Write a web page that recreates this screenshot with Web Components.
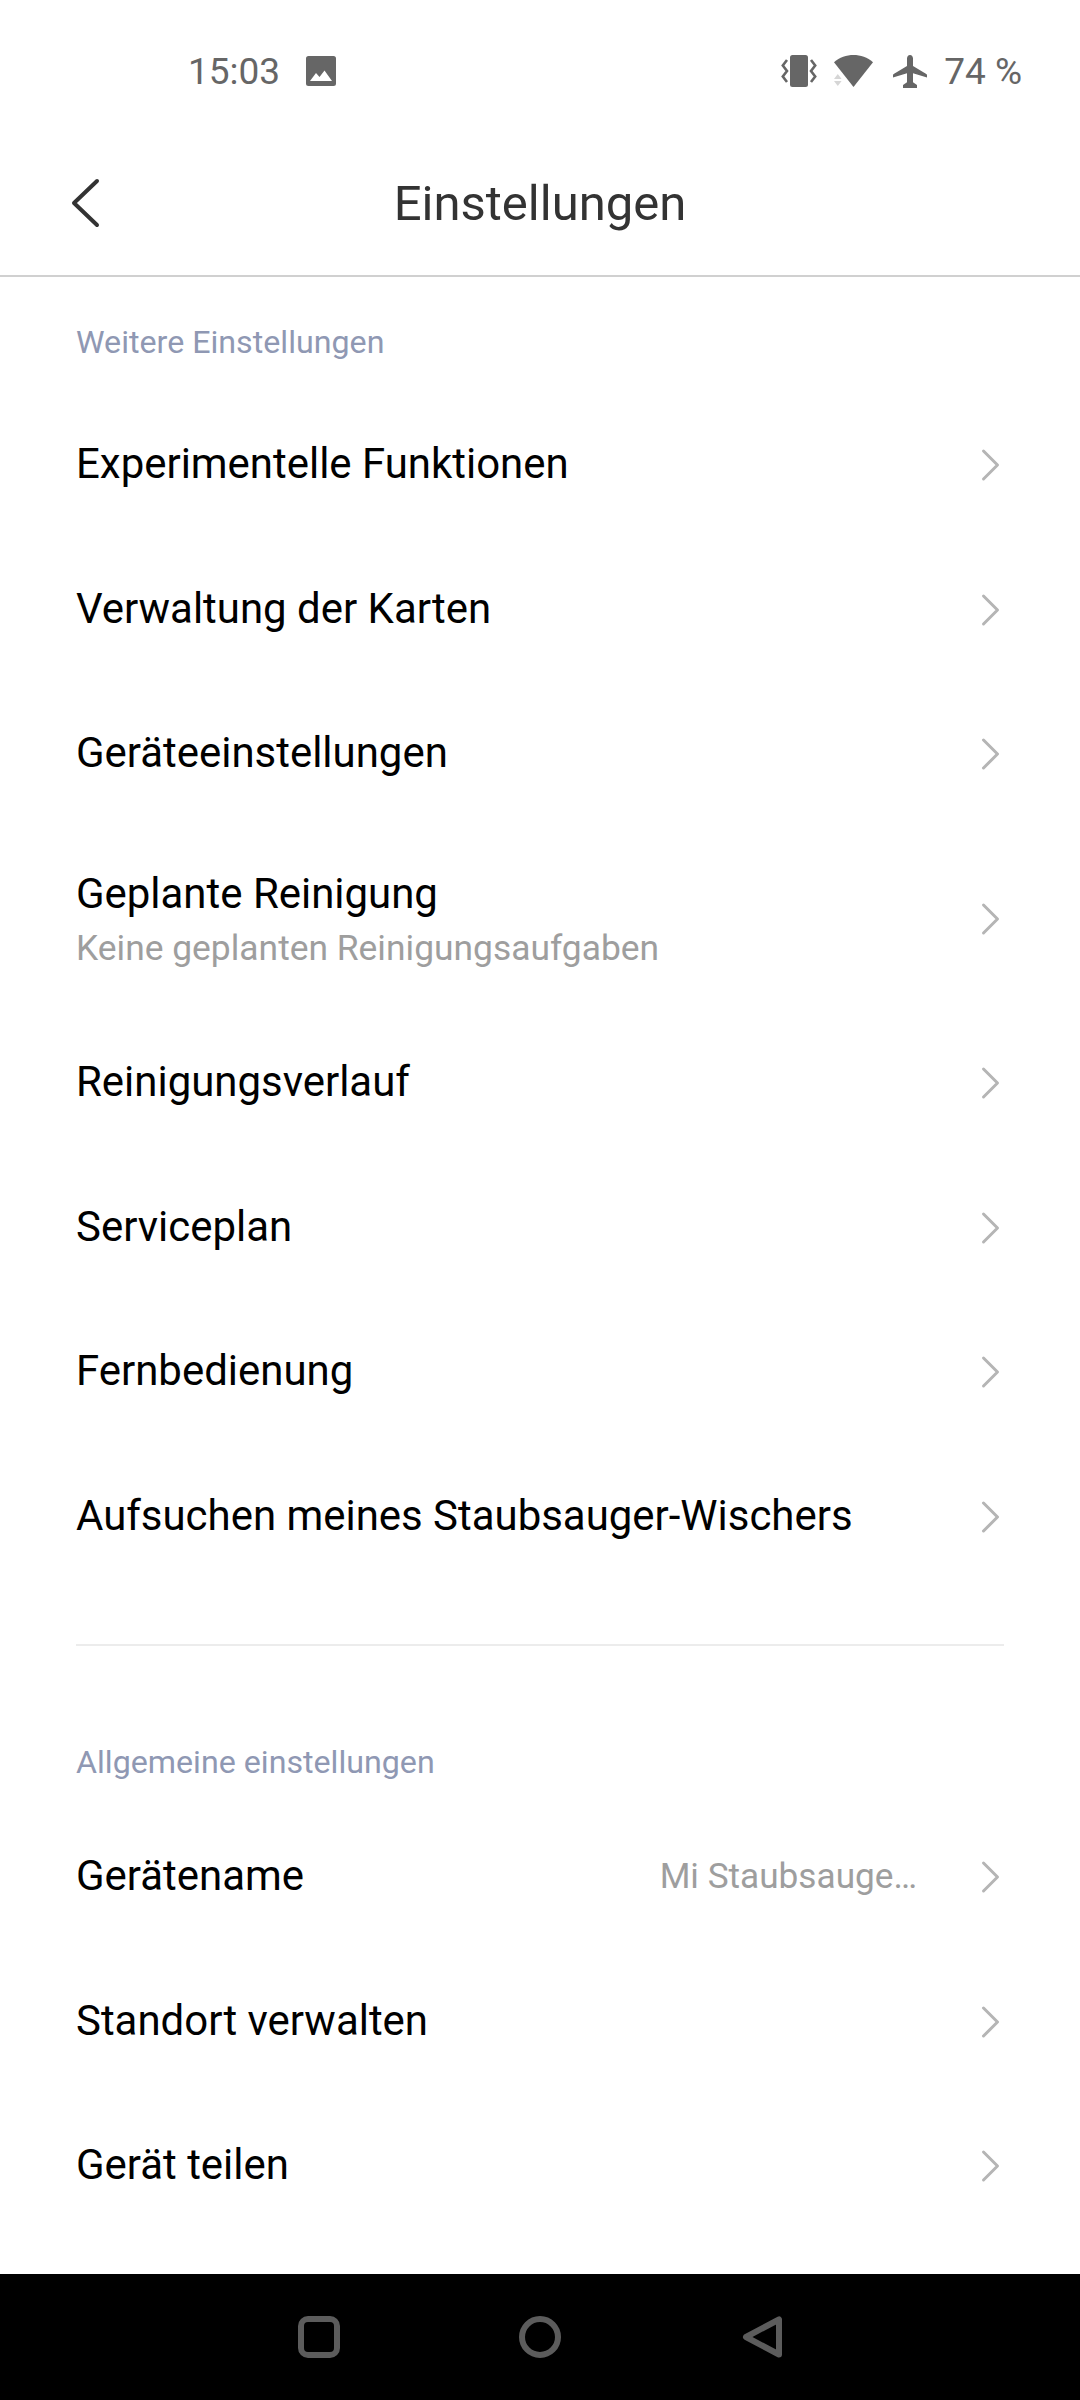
<!DOCTYPE html>
<html>
<head>
<meta charset="utf-8">
<style>
  html, body { margin: 0; padding: 0; background: #fff; }
  body { width: 1080px; height: 2400px; overflow: hidden; font-family: Roboto, sans-serif; display: flex; flex-direction: column; }
  main { flex: 1; display: block; }
</style>
</head>
<body>
<status-bar></status-bar>
<app-header>Einstellungen</app-header>
<main>
  <section-title style="--top: 44.5px; --h: 70.5px">Weitere Einstellungen</section-title>
  <setting-row>Experimentelle Funktionen</setting-row>
  <setting-row>Verwaltung der Karten</setting-row>
  <setting-row>Geräteeinstellungen</setting-row>
  <setting-row style="--h: 184px"><span slot="sub">Keine geplanten Reinigungsaufgaben</span>Geplante Reinigung</setting-row>
  <setting-row>Reinigungsverlauf</setting-row>
  <setting-row>Serviceplan</setting-row>
  <setting-row>Fernbedienung</setting-row>
  <setting-row>Aufsuchen meines Staubsauger-Wischers</setting-row>
  <list-divider></list-divider>
  <section-title style="--top: 0px; --h: 61.5px">Allgemeine einstellungen</section-title>
  <setting-row><span slot="value">Mi Staubsauge…</span>Gerätename</setting-row>
  <setting-row>Standort verwalten</setting-row>
  <setting-row>Gerät teilen</setting-row>
</main>
<nav-bar></nav-bar>

<script>
  const statusTemplate = document.createElement('template')
  statusTemplate.innerHTML = `
    <style>
      :host { display: flex; align-items: center; height: 142px; box-sizing: border-box; padding: 0 58px 0 188px; color: #666; font-size: 37px; flex: none; }
      .left, .right { display: flex; align-items: center; }
      .right { margin-left: auto; }
      svg { display: block; fill: #666; }
      .img { margin-left: 26px; }
      .wifi { margin-left: 17px; }
      .plane { margin-left: 20px; }
      .pct { margin-left: 17px; }
    </style>
    <div class="left">
      <span>15:03</span>
      <svg class="img" width="30" height="30" viewBox="0 0 30 30"><path fill-rule="evenodd" d="M2.500 0h25A2.500 2.500 0 0 1 30 2.500v25a2.500 2.500 0 0 1-2.500 2.500h-25A2.500 2.500 0 0 1 0 27.500v-25A2.500 2.500 0 0 1 2.500 0zM4 25h22l-7.500-10.500-5 6.500-3.500-4z"/></svg>
    </div>
    <div class="right">
      <svg width="36" height="33" viewBox="0 0 36 33">
        <rect x="9" y="0" width="18" height="32" rx="2.500"/>
        <path d="M6 5 L1.800 10.500 L6 16 L1.800 21.500 L6 27" fill="none" stroke="#666" stroke-width="2.600"/>
        <path d="M30 5 L34.200 10.500 L30 16 L34.200 21.500 L30 27" fill="none" stroke="#666" stroke-width="2.600"/>
      </svg>
      <svg class="wifi" width="39" height="32" viewBox="0 0 39 32">
        <path d="M0 7.300 C11 -2.300 28 -2.300 39 7.300 L19.500 32z"/>
        <path d="M0 24l3.800-5 3.800 5zM0 26l3.800 5 3.800-5z" fill="#d6d6d6"/>
      </svg>
      <svg class="plane" width="34" height="33" viewBox="0 0 34 33"><path d="M17 0c1.800 0 3 1.700 3 3.500V11l13.300 8c.5.300.7.800.7 1.300v2.300L20 18.300v8.900l4 2.800V33H10v-3l4-2.800v-8.900L0 22.600v-2.300c0-.5.200-1 .7-1.300L14 11V3.500C14 1.700 15.200 0 17 0z"/></svg>
      <span class="pct">74 %</span>
    </div>
  `
  customElements.define('status-bar',
    class extends HTMLElement {
      constructor () {
        super()
        this.attachShadow({ mode: 'open' })
          .appendChild(statusTemplate.content.cloneNode(true))
      }
    })

  const headerTemplate = document.createElement('template')
  headerTemplate.innerHTML = `
    <style>
      :host { display: block; position: relative; height: 135px; box-sizing: border-box; border-bottom: 2px solid #d0d0d0; flex: none; }
      .title { display: flex; align-items: center; justify-content: center; height: 122px; font-size: 49px; color: #333; }
      svg { position: absolute; left: 69px; top: 36px; }
    </style>
    <svg width="36" height="52" viewBox="0 0 36 52"><path d="M28 3 L5 25 L28 47" fill="none" stroke="#333" stroke-width="4" stroke-linecap="round" stroke-linejoin="round"/></svg>
    <div class="title"><slot></slot></div>
  `
  customElements.define('app-header',
    class extends HTMLElement {
      constructor () {
        super()
        this.attachShadow({ mode: 'open' })
          .appendChild(headerTemplate.content.cloneNode(true))
      }
    })

  const sectionTemplate = document.createElement('template')
  sectionTemplate.innerHTML = `
    <style>
      :host { display: block; padding: var(--top, 0) 76px 0; font-size: 32.2px; line-height: 40px; height: var(--h, 62px); color: #8f98b3; }
    </style>
    <slot></slot>
  `
  customElements.define('section-title',
    class extends HTMLElement {
      constructor () {
        super()
        this.attachShadow({ mode: 'open' })
          .appendChild(sectionTemplate.content.cloneNode(true))
      }
    })

  const rowTemplate = document.createElement('template')
  rowTemplate.innerHTML = `
    <style>
      :host { display: flex; align-items: center; height: var(--h, 144.6px); padding: 0 77px 0 76px; }
      .text { flex: 1; min-width: 0; }
      .text.two { padding-top: 4px; }
      .label { font-size: 41.95px; line-height: 54px; color: #000; }
      .sub { font-size: 35.4px; line-height: 50px; margin-top: 2px; color: #9e9e9e; }
      .sub:not(.on) { display: none; }
      .value { font-size: 35.2px; color: #9e9e9e; margin-right: 62px; }
      svg { display: block; flex: none; margin-top: 2px; }
    </style>
    <div class="text">
      <div class="label"><slot></slot></div>
      <div class="sub"><slot name="sub"></slot></div>
    </div>
    <div class="value"><slot name="value"></slot></div>
    <svg width="24" height="36" viewBox="0 0 24 36"><path d="M4.500 4 L18.500 18 L4.500 32" fill="none" stroke="#b5b5b5" stroke-width="3" stroke-linecap="round" stroke-linejoin="round"/></svg>
  `
  customElements.define('setting-row',
    class extends HTMLElement {
      constructor () {
        super()
        this.attachShadow({ mode: 'open' })
          .appendChild(rowTemplate.content.cloneNode(true))
      }

      connectedCallback () {
        if (this.querySelector('[slot="sub"]')) {
          this.shadowRoot.querySelector('.sub').classList.add('on')
          this.shadowRoot.querySelector('.text').classList.add('two')
        }
      }
    })

  const dividerTemplate = document.createElement('template')
  dividerTemplate.innerHTML = `
    <style>
      :host { display: block; height: 2px; margin: 56px 76px 96px; background: #ececec; }
    </style>
  `
  customElements.define('list-divider',
    class extends HTMLElement {
      constructor () {
        super()
        this.attachShadow({ mode: 'open' })
          .appendChild(dividerTemplate.content.cloneNode(true))
      }
    })

  const navTemplate = document.createElement('template')
  navTemplate.innerHTML = `
    <style>
      :host { display: flex; align-items: center; justify-content: center; gap: 179px; height: 126px; box-sizing: border-box; background: #000; flex: none; }
      svg { display: block; fill: none; stroke: #5c5c5c; stroke-width: 6; stroke-linejoin: round; }
    </style>
    <svg width="42" height="42" viewBox="0 0 42 42"><rect x="3" y="3" width="36" height="36" rx="7"/></svg>
    <svg width="42" height="42" viewBox="0 0 42 42"><circle cx="21" cy="21" r="18"/></svg>
    <svg width="42" height="42" viewBox="0 0 42 42"><path d="M39 3.500 V38.500 L6 21z"/></svg>
  `
  customElements.define('nav-bar',
    class extends HTMLElement {
      constructor () {
        super()
        this.attachShadow({ mode: 'open' })
          .appendChild(navTemplate.content.cloneNode(true))
      }
    })
</script>
</body>
</html>
